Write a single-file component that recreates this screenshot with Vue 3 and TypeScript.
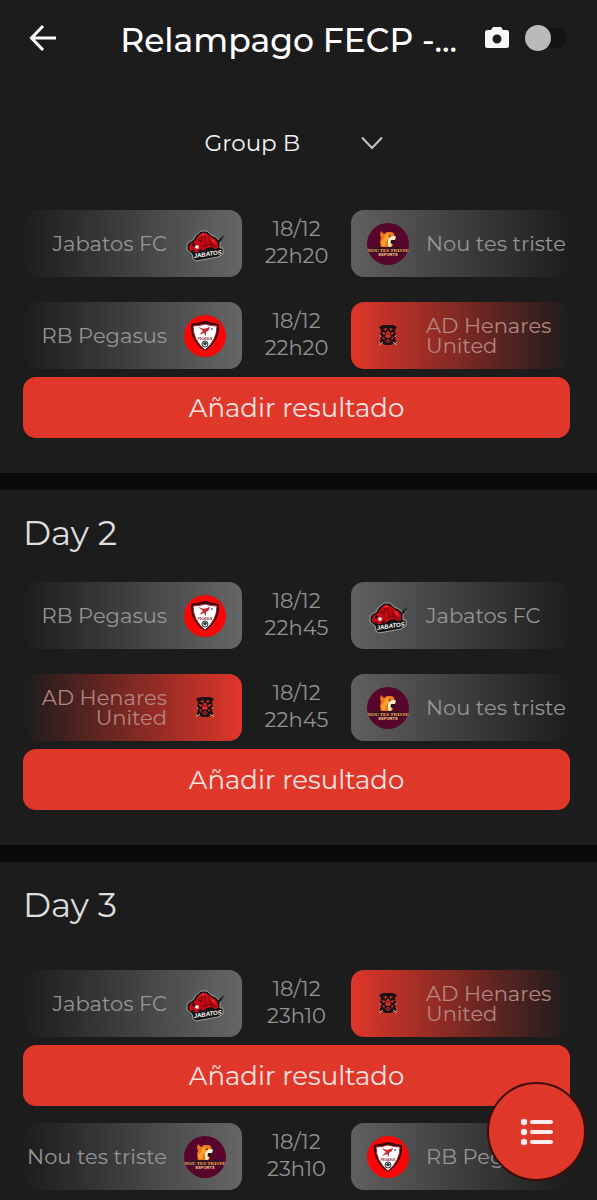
<script setup lang="ts">
import { ref } from 'vue'

type TeamId = 'jabatos' | 'nou' | 'pegasus' | 'henares'
type Side = 'home' | 'away'

interface Match {
  kind: 'match'
  home: TeamId
  away: TeamId
  date: string
  time: string
}

interface Action {
  kind: 'action'
}

interface Day {
  id: number
  title: string
  roomy: boolean
  entries: (Match | Action)[]
}

const names: Record<TeamId, string> = {
  jabatos: 'Jabatos FC',
  nou: 'Nou tes triste',
  pegasus: 'RB Pegasus',
  henares: 'AD Henares United',
}

const sides: Side[] = ['home', 'away']
const ownTeam: TeamId = 'henares'
const group = ref('Group B')
const capture = ref(false)

const match = (home: TeamId, away: TeamId, time: string): Match => ({
  kind: 'match',
  home,
  away,
  date: '18/12',
  time,
})
const action: Action = { kind: 'action' }

const days: Day[] = [
  {
    id: 1,
    title: '',
    roomy: false,
    entries: [match('jabatos', 'nou', '22h20'), match('pegasus', 'henares', '22h20'), action],
  },
  {
    id: 2,
    title: 'Day 2',
    roomy: false,
    entries: [match('pegasus', 'jabatos', '22h45'), match('henares', 'nou', '22h45'), action],
  },
  {
    id: 3,
    title: 'Day 3',
    roomy: true,
    entries: [match('jabatos', 'henares', '23h10'), action, match('nou', 'pegasus', '23h10')],
  },
]
</script>

<template>
  <div class="page">
    <header class="topbar">
      <button class="back" type="button" aria-label="Back">
        <svg width="28" height="28" viewBox="0 0 28 28" fill="none" stroke="#fff" stroke-width="3">
          <path d="M14 2 2.500 14 14 26M2.500 14H27" />
        </svg>
      </button>
      <h1>Relampago FECP -...</h1>
      <label class="capture">
        <svg width="24" height="22" viewBox="0 0 24 22" aria-hidden="true">
          <path fill="#f7f7f7" fill-rule="evenodd" d="M8 0h8l2 3h3.500A2.500 2.500 0 0 1 24 5.500v13a2.500 2.500 0 0 1-2.500 2.500h-19A2.500 2.500 0 0 1 0 18.500v-13A2.500 2.500 0 0 1 2.500 3H6ZM12 7.500a4.500 4.500 0 1 0 0 9 4.500 4.500 0 0 0 0-9Z" />
        </svg>
        <input v-model="capture" type="checkbox" role="switch" aria-label="Capture" />
      </label>
    </header>

    <main>
      <div class="group">
        <select v-model="group" aria-label="Group">
          <option>Group A</option>
          <option>Group B</option>
        </select>
        <svg width="22" height="14" viewBox="0 0 22 14" fill="none" stroke="#c3c2d0" stroke-width="2" aria-hidden="true">
          <path d="m1 1.500 10 10.500L21 1.500" />
        </svg>
      </div>

      <section v-for="day in days" :key="day.id" class="day" :class="{ roomy: day.roomy }">
        <h2 v-if="day.title">{{ day.title }}</h2>
        <template v-for="(entry, i) in day.entries" :key="i">
          <article v-if="entry.kind === 'match'" class="match">
            <div v-for="side in sides" :key="side" class="team" :class="[side, { own: entry[side] === ownTeam }]">
              <svg v-if="entry[side] === 'jabatos'" class="logo" viewBox="0 0 42 42" aria-hidden="true">
                <path d="M3 22 5 19 9 17 12 12 17 8 23 8 27 12 32 14 35 17 38 14 39 16 36 20 36 25 39 25 39 31 34 34 12 38 9 36 8 31 3 27Z" fill="#171315" stroke="#a0a0a0" stroke-width="1" />
                <path d="M5 24 7 20 11 18 14 13 18 10 22 10 26 13 31 16 34 20 34 25 31 26 28 24 23 25 18 28 14 29 9 29 5 27Z" fill="#c20b12" />
                <path d="M14 16 17 19 18 13M20 12 22 20M25 15 27 21 32 24M18 24 24 21 28 22" fill="none" stroke="#85070d" stroke-width="1.400" />
                <path d="M16 12 19 10 22 11 19 13ZM26 15 31 18 32 21 28 19Z" fill="#ee2125" />
                <path d="M12 22 15 23 14 26 11 25Z" fill="#fff" />
                <path d="M9 19 11 22 8 24ZM8 26 11 28 8 29ZM14 28 18 25 17 29Z" fill="#15161a" />
                <path d="m34 20 2-4 3-2-2 4" fill="none" stroke="#24262f" stroke-width="1.400" />
                <text x="10" y="35" class="wordmark" fill="#fff" transform="rotate(-8 10 35)">JABATOS</text>
              </svg>
              <svg v-else-if="entry[side] === 'nou'" class="logo" viewBox="0 0 42 42" aria-hidden="true">
                <circle cx="21" cy="21" r="21" fill="#58052d" />
                <path d="M14 25 13 18 14 15 13 12 14 8 17 11 20 9 25 9 29 12 29 15 25 17 27 20 24 25Z" fill="#ed781d" />
                <path d="M18 12 21 11 25 12 23 16 19 18 18 23 15 23 14 19 17 16Z" fill="#ffa12c" />
                <path d="M21 21 21 17 25 13 29 13 28 17 24 17 23 20 25 22 22 25Z" fill="#fff0d8" />
                <path d="m21 13 3-1-1 2zM27 11l3 1-2 2zM24 17h4l-1 5-3-2z" fill="#23151a" />
                <rect x="4" y="24" width="34" height="6" rx="1" fill="#351221" />
                <text x="21" y="29" class="crest-name" text-anchor="middle" fill="#ffb45c">NOU TES TRISTE</text>
                <text x="21" y="33" class="crest-sub" text-anchor="middle" fill="#f8d28b">ESPORTS</text>
              </svg>
              <svg v-else-if="entry[side] === 'pegasus'" class="logo" viewBox="0 0 42 42" aria-hidden="true">
                <circle cx="21" cy="21" r="21" fill="#fb0506" />
                <path d="M7 9Q14 8 21 6Q28 8 35 9Q36 26 21 36Q6 26 7 9Z" fill="#2b090d" />
                <path d="M9 11Q15 11 21 9Q27 11 33 11Q33 25 21 35Q9 25 9 11Z" fill="#fff" stroke="#b62128" stroke-width="1" />
                <path d="M14 12 20 14 26 12 25 15 22 17 22 21 20 18 15 20 19 16Z" fill="#cd2630" />
                <circle cx="28" cy="14" r="1" fill="#3977af" />
                <text x="21" y="25" class="tiny-name" text-anchor="middle" fill="#8e2b34">PEGASUS</text>
                <circle cx="21" cy="29" r="3" fill="#d5e1df" stroke="#27393b" />
                <path d="m21 27 2 1-1 2h-2l-1-2Z" fill="#20383a" />
              </svg>
              <svg v-else class="logo" viewBox="0 0 42 42" aria-hidden="true">
                <path d="M12 12 16 10 26 10 30 12 28 15 29 20 28 24 30 28 27 28 24 30 18 30 15 28 12 28 14 24 13 20 14 15Z" fill="#1c1113" />
                <path d="M12 27 14 29M16 27 12 30M30 27 28 29M26 27 30 30M13 20 14 22M29 20 28 22" fill="none" stroke="#c4a09c" stroke-width="1" />
                <path d="M16 14 20 13 19 16ZM26 14 23 13 23 16ZM14 17 19 18 17 20ZM28 17 23 18 25 20ZM20 16 22 16 24 22 21 23 18 22ZM15 22 18 23 17 25ZM27 22 24 23 25 25ZM18 26 21 24 24 26 21 28Z" fill="#e02f2a" />
                <path d="M20 19 22 19M19 26 23 26" stroke="#1c1113" stroke-width="1" />
              </svg>
              <span>{{ names[entry[side]] }}</span>
            </div>
            <div class="when">
              <span>{{ entry.date }}</span>
              <span>{{ entry.time }}</span>
            </div>
          </article>
          <button v-else class="add" type="button">Añadir resultado</button>
        </template>
      </section>
    </main>

    <button class="fab" type="button" aria-label="Menu">
      <svg width="34" height="28" viewBox="0 0 34 28" fill="#ffeceb" aria-hidden="true">
        <circle cx="4" cy="4" r="3.200" />
        <circle cx="4" cy="14" r="3.200" />
        <circle cx="4" cy="24" r="3.200" />
        <rect x="10" y="2" width="23" height="4" rx="2" />
        <rect x="10" y="12" width="23" height="4" rx="2" />
        <rect x="10" y="22" width="23" height="4" rx="2" />
      </svg>
    </button>
  </div>
</template>

<style>
body {
  background: #1c1c1c;
}
</style>

<style scoped>
.page {
  min-height: 100vh;
  box-sizing: border-box;
  background: #1c1c1c;
  color: #f4f4f4;
  font-family: Montserrat, Inter, "Noto Sans", sans-serif;
}
.page * {
  box-sizing: border-box;
}
.wordmark {
  font: italic 900 6px "Liberation Sans", sans-serif;
}
.crest-name {
  font: 700 5px "Liberation Serif", serif;
}
.crest-sub {
  font: 700 4px "Liberation Sans", sans-serif;
}
.tiny-name {
  font: 700 3px "Liberation Sans", sans-serif;
}
button,
select {
  border: 0;
  padding: 0;
  background: none;
  color: inherit;
  font-family: inherit;
  cursor: pointer;
}
.topbar {
  display: flex;
  align-items: center;
  height: 76px;
  padding: 0 30px 0 29px;
}
.back {
  display: flex;
  width: 28px;
}
h1,
h2 {
  margin: 0;
  font-weight: 400;
}
h1 {
  flex: 1;
  margin: 4px 28px 0 20px;
  color: #fff;
  font-size: 33px;
  font-weight: 500;
  line-height: 40px;
  text-align: right;
  white-space: nowrap;
}
.capture {
  display: flex;
  align-items: center;
  gap: 16px;
}
.capture input {
  display: flex;
  align-items: center;
  appearance: none;
  width: 42px;
  height: 20px;
  margin: 0;
  border-radius: 10px;
  background: #141414;
}
.capture input::before {
  content: "";
  width: 26px;
  height: 26px;
  flex: none;
  border-radius: 50%;
  background: #bababa;
}
.capture input:checked::before {
  margin-left: auto;
}
.group {
  display: grid;
  align-items: center;
  width: 188px;
  height: 134px;
  margin: 0 auto;
  padding-right: 10px;
}
.group select,
.group svg {
  grid-area: 1 / 1;
}
.group select {
  appearance: none;
  width: 100%;
  height: 40px;
  font-size: 23px;
}
.group svg {
  justify-self: end;
  pointer-events: none;
}
.day {
  display: flex;
  flex-direction: column;
  padding: 0 27px 35px 23px;
}
.day + .day {
  border-top: 17px solid #090909;
}
.day:first-of-type {
  margin-top: -17px;
}
.day:last-child {
  padding-bottom: 0;
}
h2 {
  padding: 22px 0 11px;
  color: #dedede;
  font-size: 34px;
  line-height: 42px;
}
.roomy h2 {
  padding-bottom: 27px;
}
.match {
  display: grid;
  grid-template-columns: 1fr 109px 1fr;
  margin: 17px 0 8px;
}
.team {
  display: flex;
  align-items: center;
  gap: 17px;
  height: 67px;
  grid-row: 1;
  border-radius: 13px;
  color: #959595;
  font-size: 21px;
  line-height: 20px;
}
.team span {
  flex: 1;
}
.home {
  grid-column: 1;
  flex-direction: row-reverse;
  padding-right: 16px;
  background: linear-gradient(to left, #666, #1c1c1c);
  text-align: right;
}
.away {
  grid-column: 3;
  padding-left: 16px;
  background: linear-gradient(to right, #606060, #1c1c1c);
}
.home.own {
  background: linear-gradient(to left, #e03629, #1c1c1c);
}
.away.own {
  background: linear-gradient(to right, #e03629, #1c1c1c);
}
.own {
  color: #b58582;
}
.logo {
  width: 42px;
  height: 42px;
  flex: none;
}
.when {
  display: flex;
  flex-direction: column;
  justify-content: center;
  grid-row: 1;
  grid-column: 2;
  padding-bottom: 4px;
  color: #929292;
  font-size: 21px;
  line-height: 27px;
  text-align: center;
}
.add {
  height: 61px;
  border-radius: 13px;
  background: #df372a;
  color: #f8e3e1;
  font-size: 26px;
}
.fab {
  position: fixed;
  right: 11px;
  bottom: 19px;
  display: flex;
  align-items: center;
  justify-content: center;
  width: 99px;
  height: 99px;
  border: 2px solid #3d0d0a;
  border-radius: 50%;
  background: #df372a;
}
</style>
